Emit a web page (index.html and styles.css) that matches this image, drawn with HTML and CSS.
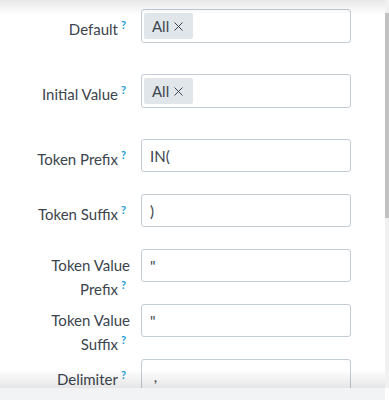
FILE: index.html
```html
<!DOCTYPE html>
<html>
  <head>
    <meta name="viewport" content="width=device-width, initial-scale=1.0" />
    <meta charset="utf-8" />
    <title>Edit Multiselect</title>
    <link rel="stylesheet" href="styles.css">
  </head>
  <body>
    <div class="panel">
      <div class="panel__body">
        <form class="form">
          <div class="form__row form__row--multi">
            <label class="form__label">Default<sup class="form__help">?</sup></label>
            <div class="form__multi">
              <span class="form__chip">All
                <svg class="form__chip-x" width="9" height="9" viewBox="0 0 9 9"><path d="M0.5 0.5 L8.5 8.5 M8.5 0.5 L0.5 8.5" /></svg>
              </span>
            </div>
          </div>
          <div class="form__row form__row--multi">
            <label class="form__label">Initial Value<sup class="form__help">?</sup></label>
            <div class="form__multi">
              <span class="form__chip">All
                <svg class="form__chip-x" width="9" height="9" viewBox="0 0 9 9"><path d="M0.5 0.5 L8.5 8.5 M8.5 0.5 L0.5 8.5" /></svg>
              </span>
            </div>
          </div>
          <div class="form__row">
            <label class="form__label">Token Prefix<sup class="form__help">?</sup></label>
            <input class="form__input" type="text" value="IN(" />
          </div>
          <div class="form__row">
            <label class="form__label">Token Suffix<sup class="form__help">?</sup></label>
            <input class="form__input" type="text" value=")" />
          </div>
          <div class="form__row">
            <label class="form__label">Token Value Prefix<sup class="form__help">?</sup></label>
            <input class="form__input" type="text" value="&quot;" />
          </div>
          <div class="form__row">
            <label class="form__label">Token Value Suffix<sup class="form__help">?</sup></label>
            <input class="form__input" type="text" value="&quot;" />
          </div>
          <div class="form__row">
            <label class="form__label">Delimiter<sup class="form__help">?</sup></label>
            <input class="form__input" type="text" value=" , " />
          </div>
        </form>
      </div>
      <div class="panel__shadow panel__shadow--top"></div>
      <div class="panel__shadow panel__shadow--bottom"></div>
      <div class="panel__scrollbar"><div class="panel__thumb"></div></div>
      <div class="panel__footer">Create Dashboard</div>
    </div>
  </body>
</html>
```

FILE: styles.css
```css
body {
  --color-text: #3c444d;
  --color-help: #1a9cd8;
  --color-border: #c3cbd4;
  --color-chip: #e1e6eb;

  margin: 0;
  overflow: hidden;
  background: #ffffff;
  font-family: "Lato", sans-serif;
  font-size: 15px;
  color: var(--color-text);
}

.panel {
  position: relative;
  width: 389px;
  height: 400px;
  overflow: hidden;
}

.panel__body {
  width: 385px;
  height: 388px;
  overflow: hidden;
}

.panel__scrollbar {
  position: absolute;
  top: 0;
  right: 0;
  width: 4px;
  height: 388px;
  background: #f1f1f1;
}

.panel__thumb {
  margin-top: 13px;
  height: 205px;
  background: #c1c1c1;
}

.panel__shadow {
  position: absolute;
  left: 0;
  width: 385px;
  pointer-events: none;
}

.panel__shadow--top {
  top: 0;
  height: 15px;
  background: linear-gradient(rgba(0, 0, 0, 0.09), rgba(0, 0, 0, 0));
}

.panel__shadow--bottom {
  top: 370px;
  height: 18px;
  background: linear-gradient(rgba(0, 0, 0, 0), rgba(0, 0, 0, 0.1));
}

.panel__footer {
  width: 385px;
  height: 50px;
  padding: 8px 22px 0;
  box-sizing: border-box;
  background: #f2f3f5;
  font-size: 15px;
}

.form {
  padding: 9px 0 0 10px;
}

.form__row {
  display: grid;
  grid-template-columns: 120px 210px;
  grid-template-rows: 33px;
  column-gap: 11px;
  align-items: start;
  margin-bottom: 22px;
}

.form__row--multi {
  grid-template-rows: 34px;
  margin-bottom: 31px;
}

.form__label {
  padding-top: 6px;
  line-height: 20px;
  text-align: right;
  font-size: 15px;
}

.form__help {
  margin: 0 4px 0 3px;
  font-size: 11px;
  font-weight: 700;
  color: var(--color-help);
}

.form__input,
.form__multi {
  box-sizing: border-box;
  width: 210px;
  border: 1px solid var(--color-border);
  border-radius: 3px;
  background: #ffffff;
}

.form__input {
  height: 33px;
  padding: 0 8px;
  outline: none;
  font: 400 15px "Lato", sans-serif;
  color: var(--color-text);
}

.form__multi {
  height: 34px;
  padding: 3px 2px;
}

.form__chip {
  display: inline-flex;
  align-items: center;
  gap: 5px;
  height: 26px;
  padding: 0 10px 0 8px;
  border-radius: 2px;
  background: var(--color-chip);
}

.form__chip-x {
  fill: none;
  stroke: var(--color-text);
  stroke-width: 1;
}
```
